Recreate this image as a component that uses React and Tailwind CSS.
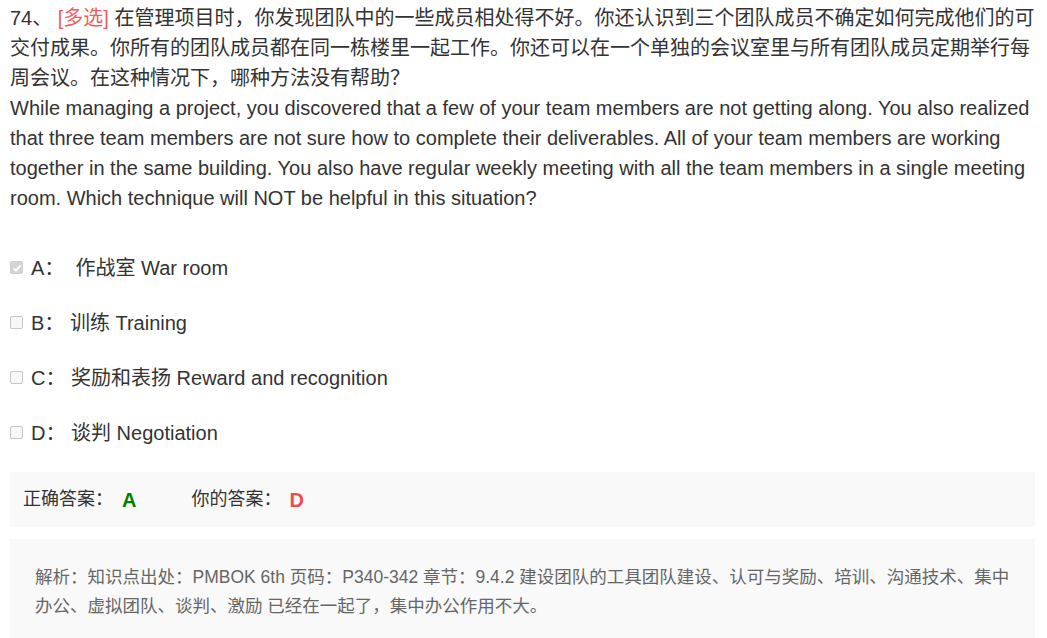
import React from "react";

const font = { fontFamily: '"Liberation Sans", "Noto Sans CJK SC", sans-serif' };

function Box({ checked }) {
  return (
    <span
      className={
        "inline-flex items-center justify-center w-[13px] h-[13px] rounded-[2px] border shrink-0 " +
        (checked ? "bg-[#d4d4d4] border-[#cfcfcf]" : "bg-[#f7f7f7] border-[#c6c6c6]")
      }
    >
      {checked && (
        <svg width="10" height="10" viewBox="0 0 10 10">
          <path d="M1.5 5.2 L4 7.6 L8.6 2.4" stroke="#fff" strokeWidth="1.8" fill="none" />
        </svg>
      )}
    </span>
  );
}

function Option({ label, text, checked, extraSpace }) {
  return (
    <div className="h-[55px] flex items-center gap-[8px] text-[20px] text-[#333]">
      <Box checked={checked} />
      <span className="whitespace-pre">
        {label}：{extraSpace ? "  " : " "}
        {text}
      </span>
    </div>
  );
}

export default function App() {
  return (
    <div className="w-[1047px] h-[638px] overflow-hidden bg-white pl-[10px] pr-[12px]" style={font}>
      <div className="pt-[3px] text-[20px] leading-[30px] text-[#333]">
        <div className="whitespace-nowrap">
          74、 <span className="text-[#f25c5c]">[多选]</span> 在管理项目时，你发现团队中的一些成员相处得不好。你还认识到三个团队成员不确定如何完成他们的可
        </div>
        <div className="whitespace-nowrap">
          交付成果。你所有的团队成员都在同一栋楼里一起工作。你还可以在一个单独的会议室里与所有团队成员定期举行每
        </div>
        <div className="whitespace-nowrap">周会议。在这种情况下，哪种方法没有帮助？</div>
        <div className="whitespace-nowrap">
          While managing a project, you discovered that a few of your team members are not getting along. You also realized
        </div>
        <div className="whitespace-nowrap">
          that three team members are not sure how to complete their deliverables. All of your team members are working
        </div>
        <div className="whitespace-nowrap">
          together in the same building. You also have regular weekly meeting with all the team members in a single meeting
        </div>
        <div className="whitespace-nowrap">room. Which technique will NOT be helpful in this situation?</div>
      </div>

      <div className="mt-[27px]">
        <Option label="A" text="作战室 War room" checked extraSpace />
        <Option label="B" text="训练 Training" />
        <Option label="C" text="奖励和表扬 Reward and recognition" />
        <Option label="D" text="谈判 Negotiation" />
      </div>

      <div className="mt-[12px] h-[55px] bg-[#f9f9f9] flex items-center pl-[13px] text-[18px] text-[#333]">
        <span>正确答案：</span>
        <span className="font-bold text-[#008000] ml-[9px] text-[20px]">A</span>
        <span className="ml-[55px]">你的答案：</span>
        <span className="font-bold text-[#f5484e] ml-[8px] text-[20px]">D</span>
      </div>

      <div className="mt-[12px] bg-[#f9f9f9] pl-[25px] pr-[20px] pt-[24px] pb-[20px] text-[17.5px] leading-[29px] text-[#666]">
        <div className="whitespace-nowrap">
          解析：知识点出处：PMBOK 6th 页码：P340-342 章节：9.4.2 建设团队的工具团队建设、认可与奖励、培训、沟通技术、集中
        </div>
        <div className="whitespace-nowrap">办公、虚拟团队、谈判、激励 已经在一起了，集中办公作用不大。</div>
      </div>
    </div>
  );
}
